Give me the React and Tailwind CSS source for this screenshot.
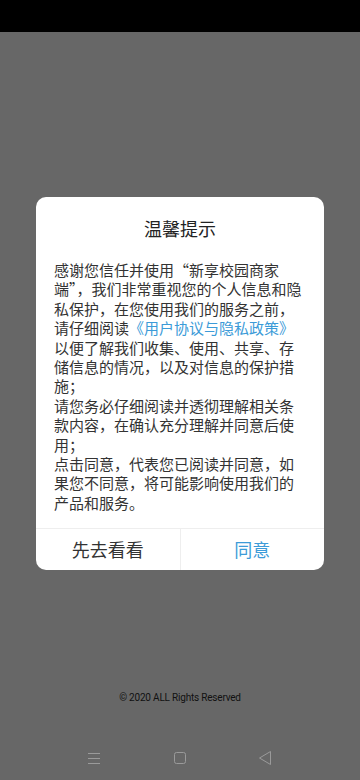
import React from "react";

const cjk = { fontFamily: '"Noto Sans CJK SC", "Noto Sans", sans-serif' };

function Line({ children }) {
  return <div className="whitespace-nowrap h-[19.4px] leading-[19.4px]">{children}</div>;
}

export default function App() {
  return (
    <div className="w-[360px] h-[780px] flex flex-col bg-[#676767] overflow-hidden" style={cjk}>
      <div className="h-8 bg-black shrink-0" />
      <div className="flex-1 flex flex-col items-center">
        <div className="mt-[165px] w-[288px] bg-white rounded-[10px] flex flex-col">
          <div className="pt-[19px] h-[43px] text-center text-[18px] leading-[24px] text-[#222]">温馨提示</div>
          <div className="mt-[20px] px-[18px] text-[15px] text-[#333]">
            <Line>感谢您信任并使用“新享校园商家</Line>
            <Line>端”，我们非常重视您的个人信息和隐</Line>
            <Line>私保护，在您使用我们的服务之前，</Line>
            <Line>
              请仔细阅读<span className="text-[#3c9bd8]">《用户协议与隐私政策》</span>
            </Line>
            <Line>以便了解我们收集、使用、共享、存</Line>
            <Line>储信息的情况，以及对信息的保护措</Line>
            <Line>施；</Line>
            <Line>请您务必仔细阅读并透彻理解相关条</Line>
            <Line>款内容，在确认充分理解并同意后使</Line>
            <Line>用；</Line>
            <Line>点击同意，代表您已阅读并同意，如</Line>
            <Line>果您不同意，将可能影响使用我们的</Line>
            <Line>产品和服务。</Line>
          </div>
          <div className="mt-[16px] border-t border-[#eeeeee] flex h-[42px]">
            <div className="flex-1 flex items-center justify-center text-[18px] text-[#333] border-r border-[#eeeeee]">
              先去看看
            </div>
            <div className="flex-1 flex items-center justify-center text-[18px] text-[#3c9bd8]">同意</div>
          </div>
        </div>
        <div
          className="mt-[120px] h-4 leading-4 text-[10px] tracking-[-0.2px] text-[#111]"
          style={{ fontFamily: 'Roboto, "Liberation Sans", sans-serif' }}
        >
          © 2020 ALL Rights Reserved
        </div>
        <div className="mt-auto h-[44px] w-full flex items-center justify-center">
          <svg width="360" height="44" viewBox="0 0 360 44" fill="none">
            <g stroke="#9a9a9a" strokeWidth="1">
              <line x1="88" y1="17.5" x2="100" y2="17.5" />
              <line x1="88" y1="22.5" x2="100" y2="22.5" />
              <line x1="88" y1="27.5" x2="100" y2="27.5" />
              <rect x="174.5" y="16.5" width="11" height="11" rx="2" />
              <path d="M259.5 22 L270.5 15.5 L270.5 28.5 Z" strokeLinejoin="round" />
            </g>
          </svg>
        </div>
      </div>
    </div>
  );
}
